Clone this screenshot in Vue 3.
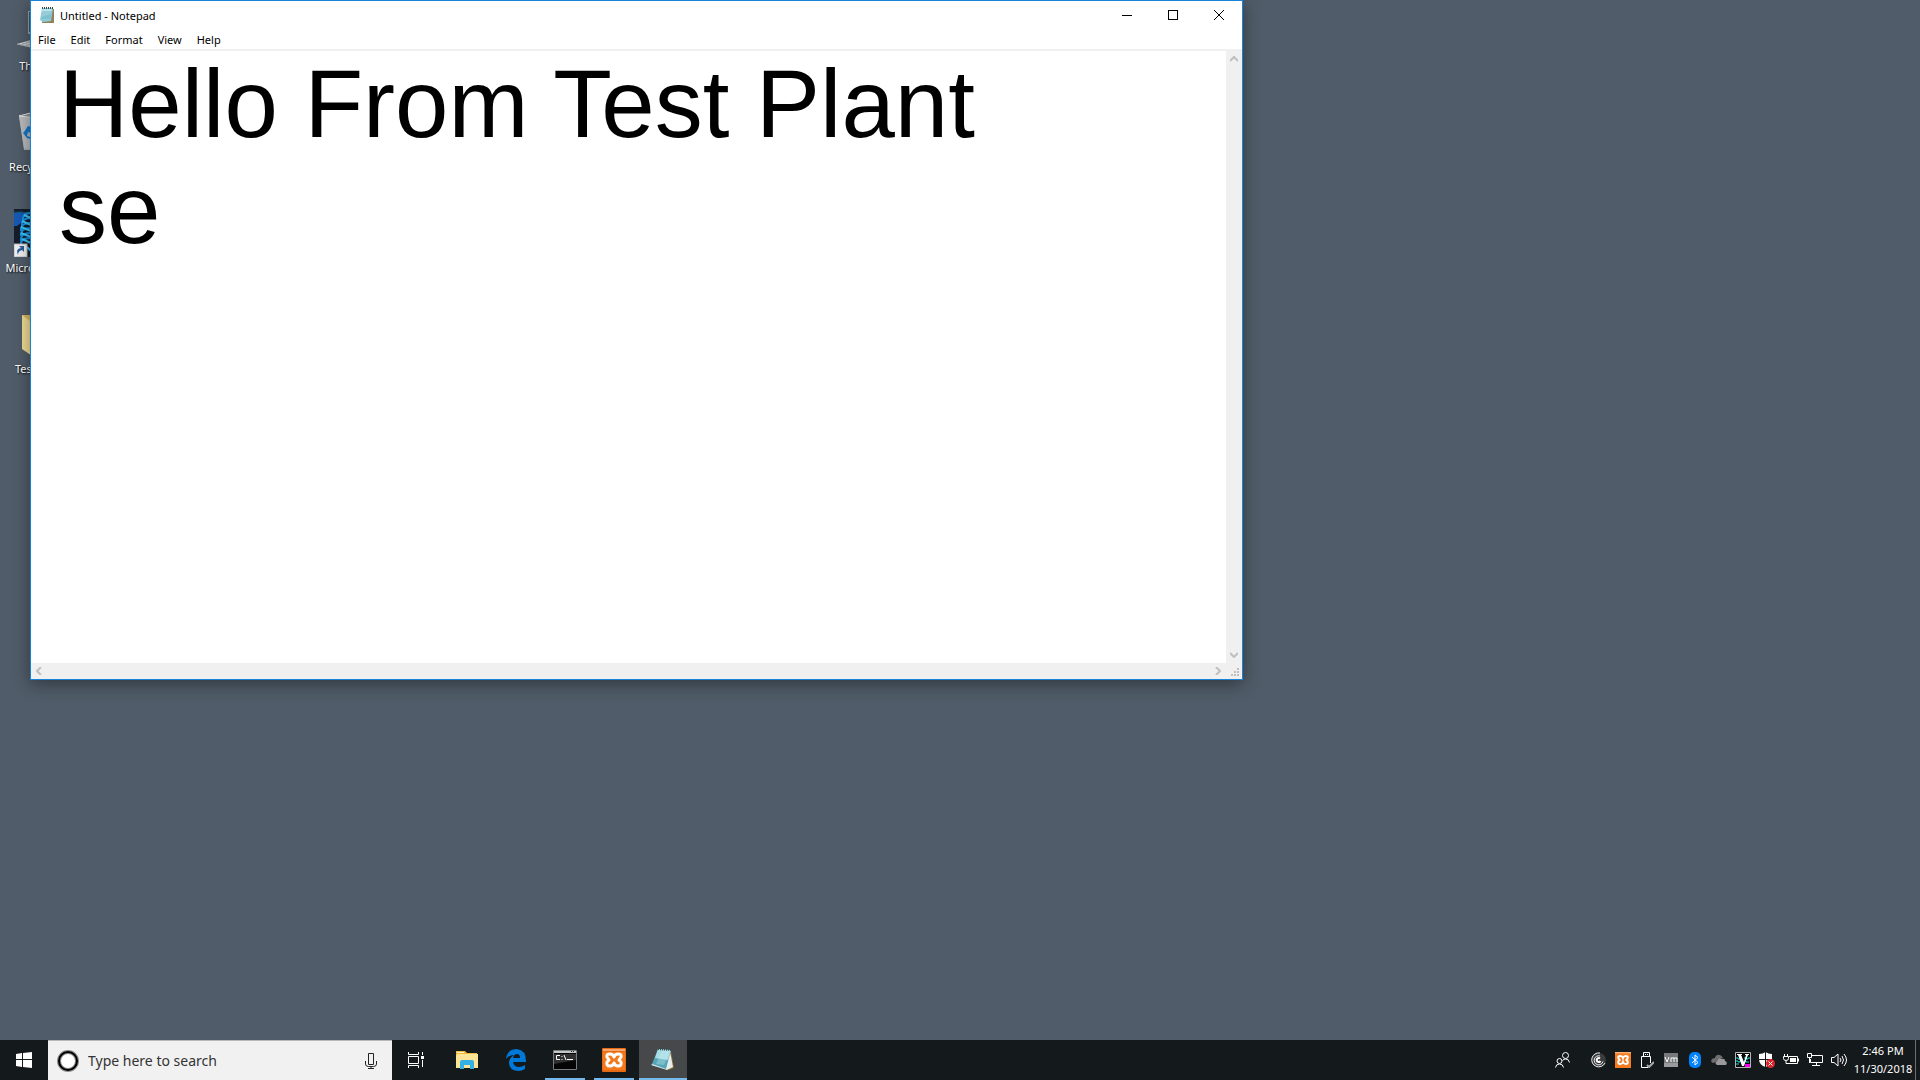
<script setup>
import { ref } from 'vue'

const menus = ['File', 'Edit', 'Format', 'View', 'Help']
const note = ref('Hello From Test Plant\nse')
const query = ref('')
</script>

<template>
  <div class="screen">
    <main class="desktop">
      <div class="shortcuts">
        <a class="shortcut" href="#pc">
          <svg width="48" height="48" viewBox="0 0 48 48">
            <rect x="14" y="4" width="34" height="23" fill="#8fa6b5" />
            <rect x="15" y="5" width="32" height="20" fill="#3d5666" />
            <path d="M3 37L17 33H44V42H24Z" fill="#d5d8da" />
            <path d="M3 37L24 42M8 36L24 40M12 35L24 38M7 38L19 33M12 39L22 34" stroke="#9da3a8" fill="none" />
          </svg>
          <span>This PC</span>
        </a>
        <a class="shortcut" href="#bin">
          <svg width="48" height="48" viewBox="0 0 48 48">
            <path d="M5 8L20 4L43 8L38 42H10Z" fill="#a9adb1" />
            <path d="M5 8L22 9L24 42L10 40Z" fill="#b9bcc0" />
            <path d="M5 8L20 4L43 8L22 10Z" fill="#8b9096" stroke="#dfe1e3" />
            <path d="M10 24l4-6 5 1-2 4 4 1v5h-3l2 3-7-2-4-5z" fill="#1276ce" />
            <path d="M14 24l3 1-1 4-3-1z" fill="#b9bcc0" />
          </svg>
          <span>Recycle Bin</span>
        </a>
        <a class="shortcut" href="#micro">
          <svg width="48" height="48" viewBox="0 0 48 48">
            <rect width="48" height="48" fill="#151d2b" />
            <path d="M0 4Q8 1 12 4L8 13L3 17H0Z" fill="#165ab4" />
            <path d="M0 3L18 4" stroke="#13586c" fill="none" />
            <path d="M17 4Q8 4 9 12M17 9Q7 9 8 17M17 14Q6 14 7 22M17 19Q6 19 7 27M17 24Q6 24 7 32M17 29Q6 29 7 36" stroke="#1591e4" stroke-width="2" fill="none" />
            <path d="M10 6L17 9M8 12L17 16M7 18L17 22M7 24L17 28M8 30L17 34M13 38L17 42" stroke="#3cc4f5" stroke-width="2" fill="none" />
            <rect y="35" width="13" height="13" fill="#f1f1f1" stroke="#b7b7b7" />
            <path d="M4 46Q1 40 7 39L5 37H10V43L8 41Q4 42 4 46Z" fill="#2d5e9e" />
          </svg>
          <span>Micro Dicom</span>
        </a>
        <a class="shortcut" href="#folder">
          <svg width="48" height="48" viewBox="0 0 48 48">
            <path d="M8 5H36V44H20L8 36Z" fill="#d6b65f" />
            <path d="M8 5L24 17V50L8 39Z" fill="#eedb93" />
          </svg>
          <span>Test Plan</span>
        </a>
      </div>

      <section class="window">
        <header class="titlebar">
          <svg class="app-icon" width="16" height="16" viewBox="0 0 16 16">
            <path d="M4 2H15V16H3Z" fill="#93815a" />
            <path d="M3 1H14L12 14L4 15L1 13Z" fill="#8accda" />
            <path d="M3 2H13L12 7L2 10Z" fill="#b9e5ed" />
            <path d="M3 5H13M2 7H13M2 9H12M2 11H12" stroke="#74b4c2" />
            <path d="M3 1H14" stroke="#33444b" stroke-width="2" stroke-dasharray="1 1" />
          </svg>
          <h1>Untitled - Notepad</h1>
          <div class="controls">
            <button aria-label="Minimize"><svg width="10" height="10" viewBox="0 0 10 10"><path d="M0 5H10V6H0Z" fill="#000" /></svg></button>
            <button aria-label="Maximize"><svg width="10" height="10" viewBox="0 0 10 10"><path d="M0 0H10V10H0ZM1 1V9H9V1Z" fill="#000" fill-rule="evenodd" /></svg></button>
            <button aria-label="Close"><svg width="10" height="10" viewBox="0 0 10 10"><path d="M0 0L10 10M10 0L0 10" stroke="#000" /></svg></button>
          </div>
        </header>
        <nav class="menubar">
          <button v-for="m in menus" :key="m">{{ m }}</button>
        </nav>
        <div class="editor">
          <textarea v-model="note" aria-label="Text editor" wrap="off" spellcheck="false"></textarea>
          <div class="vbar">
            <button aria-label="Scroll up"><svg width="8" height="6" viewBox="0 0 8 6"><path d="M0 5L4 1L8 5" /></svg></button>
            <button aria-label="Scroll down"><svg width="8" height="6" viewBox="0 0 8 6"><path d="M0 1L4 5L8 1" /></svg></button>
          </div>
          <div class="hbar">
            <button aria-label="Scroll left"><svg width="6" height="8" viewBox="0 0 6 8"><path d="M5 0L1 4L5 8" /></svg></button>
            <button aria-label="Scroll right"><svg width="6" height="8" viewBox="0 0 6 8"><path d="M1 0L5 4L1 8" /></svg></button>
          </div>
          <div class="grip">
            <svg width="8" height="8" viewBox="0 0 8 8"><path d="M6 0h2v2h-2zM3 3h2v2h-2zM6 3h2v2h-2zM0 6h2v2h-2zM3 6h2v2h-2zM6 6h2v2h-2z" fill="#bfbfbf" /></svg>
          </div>
        </div>
      </section>
    </main>

    <footer class="taskbar">
      <button class="task" aria-label="Start">
        <svg width="16" height="16" viewBox="0 0 16 16"><path d="M0 2L6 1V7H0ZM7 1L16 0V7H7ZM0 8H6V15L0 14ZM7 8H16V16L7 15Z" fill="#fff" /></svg>
      </button>
      <label class="search">
        <svg width="22" height="22" viewBox="0 0 22 22"><circle cx="11" cy="11" r="9" fill="#fff" stroke="#8c8c8c" stroke-width="4" /><circle cx="11" cy="11" r="9" fill="none" stroke="#000" stroke-width="2" /></svg>
        <input v-model="query" type="text" placeholder="Type here to search" aria-label="Search" />
        <svg width="12" height="16" viewBox="0 0 12 16"><path d="M3.5 .5h5v11h-5zM.5 8v3q0 2.500 3 2.500h5q3 0 3-2.500v-3M6 13v3M3 15.500h6" fill="none" stroke="#222" /></svg>
      </label>
      <button class="task" aria-label="Task view">
        <svg width="16" height="16" viewBox="0 0 16 16"><path d="M.5 0v2.500h10V0M.5 4.500h10v7H.5zM.5 16v-2.500h10V16M14.500 0v3M14.500 8v7" fill="none" stroke="#fff" /><path d="M13 4h3v3h-3z" fill="#fff" /></svg>
      </button>
      <div class="apps">
        <button class="task" aria-label="File Explorer">
          <svg width="22" height="18" viewBox="0 0 22 18"><path d="M0 0H9L11 2H21V17H0Z" fill="#f0b83c" /><path d="M1 3H22V17H0V5Z" fill="#fde598" /><path d="M1 1H8V2H1Z" fill="#fff5bd" /><path d="M4 18V11Q4 9 6 9H16Q18 9 18 11V18H14V14H8V18Z" fill="#33b0e6" /></svg>
        </button>
        <button class="task" aria-label="Edge">
          <svg width="20" height="22" viewBox="0 0 20 22"><path d="M0 10Q1 0 11 0Q20 1 20 12V13H7Q8 18 13 18Q16 18 19 16V20Q16 22 12 22Q3 21 3 14Q3 9 8 6Q3 6 0 10ZM7 9H14Q14 5 11 5Q8 5 7 9Z" fill="#0078d7" /></svg>
        </button>
        <button class="task running" aria-label="Command Prompt">
          <svg width="24" height="20" viewBox="0 0 24 20"><path d="M.5 .5h23v19H.5z" fill="#050505" stroke="#777b7c" /><path d="M1 1h22v2H1z" fill="#c5c8c9" /><path d="M18 1h1v1h-1zM20 1h1v1h-1z" fill="#222" /><path d="M1 4H23V10L1 14Z" fill="#303030" /><path d="M7 5.500H3.500v4H7M9 6v1M9 9v1M11 5l2 5M14 9.500h6" stroke="#fff" fill="none" /></svg>
        </button>
        <button class="task running" aria-label="XAMPP">
          <svg width="24" height="24" viewBox="0 0 24 24"><rect width="24" height="24" rx="1" fill="#e46b13" /><path d="M1 1H23V3H1Z" fill="#f6a66e" /><rect x="1" y="4" width="22" height="18" fill="#f27a1c" /><path d="M12 9Q11 6 8 6Q4 6 5 9L7 12L5 14Q4 18 8 18Q11 18 12 15Q13 18 16 18Q20 18 19 14L17 12L19 9Q20 6 16 6Q13 6 12 9Z" fill="none" stroke="#fff" stroke-width="3" stroke-linejoin="round" /></svg>
        </button>
        <button class="task active" aria-label="Notepad">
          <svg width="24" height="24" viewBox="0 0 24 24"><path d="M20 3L23 20L18 22Z" fill="#8a6c32" /><path d="M19 3L22 19L16 22L0 17Z" fill="#e8eceb" /><path d="M7 1L20 2L15 21L1 16Z" fill="#55a7b8" /><path d="M7 1L20 2L17 12L4 10Z" fill="#a9dce3" /><path d="M11 3L19 3L13 17L5 16Z" fill="#c7edf0" opacity=".35" /><path d="M7 1L20 2" stroke="#394b50" stroke-width="2" stroke-dasharray="1 1" /></svg>
        </button>
      </div>

      <div class="tray">
        <button class="people" aria-label="People">
          <svg width="16" height="16" viewBox="0 0 16 16" fill="none" stroke="#fff"><circle cx="10.500" cy="3.500" r="3" /><circle cx="4.500" cy="9" r="2.500" /><path d="M.5 15.500Q1 12 4.500 12T8.500 15.500M7.500 8.500Q9 7 10.500 7Q14 7 14.500 10.500" /></svg>
        </button>
        <button aria-label="Receiver">
          <svg width="16" height="16" viewBox="0 0 16 16"><circle cx="8" cy="8" r="7" fill="#3a3c3e" /><path d="M9 1A7 7 0 1 0 14 11M9 4A4.500 4.500 0 1 0 12 9.500" fill="none" stroke="#eee" /><path d="M9 6.500A2 2 0 1 0 9.500 9" fill="none" stroke="#fff" stroke-width="2" /></svg>
        </button>
        <button aria-label="XAMPP control">
          <svg width="16" height="16" viewBox="0 0 24 24"><rect width="24" height="24" fill="#f47b20" /><path d="M0 0H24V2H0Z" fill="#f8b07c" /><path d="M12 9Q11 6 8 6Q4 6 5 9L7 12L5 14Q4 18 8 18Q11 18 12 15Q13 18 16 18Q20 18 19 14L17 12L19 9Q20 6 16 6Q13 6 12 9Z" stroke="#fff" stroke-width="3" fill="none" /></svg>
        </button>
        <button aria-label="Safely remove hardware">
          <svg width="14" height="16" viewBox="0 0 14 16"><path d="M3.500 .5h6v4h-6zM1.500 4.500h9V11M1.500 4.500v11H8M5.500 2v1M7.500 2v1" fill="none" stroke="#fff" /><path d="M7 13L9 15L14 10" fill="none" stroke="#aaa" stroke-width="2" /></svg>
        </button>
        <button aria-label="Virtual machine tools">
          <svg width="14" height="14" viewBox="0 0 14 14"><path d="M0 0h14v14H0z" fill="#77797b" /><path d="M0 10h14v4H0z" fill="#999b9d" /><path d="M1 4L3 9L5 4M7 9V5H10V9M10 5H13V9" stroke="#fff" stroke-width="1" fill="none" /></svg>
        </button>
        <button aria-label="Bluetooth">
          <svg width="12" height="16" viewBox="0 0 12 16"><rect width="12" height="16" rx="5" fill="#0082fc" /><path d="M3 5L9 10.500L6 13V3L9 5.500L3 11" fill="none" stroke="#fff" /></svg>
        </button>
        <button aria-label="OneDrive">
          <svg width="16" height="12" viewBox="0 0 16 12"><path d="M2 9Q-1 8 1 5Q3 4 4 4Q5 0 9 1Q11 2 12 4L7 5L5 8Z" fill="#6e6e6e" /><path d="M6 11Q3 9 6 7Q7 3 11 5Q14 4 14 7Q17 8 15 11Z" fill="#9a9a9a" /></svg>
        </button>
        <button aria-label="Volume graph">
          <svg width="16" height="16" viewBox="0 0 16 16"><path d="M.5 .5h15v15H.5z" fill="#080808" stroke="#b5b5b5" /><path d="M1 6h2v1h2V5h2M1 9h2v1h2v-1h2M9 6h2v1h2V6h2M9 9h2v1h3M1 12h3" stroke="#19dce0" fill="none" /><path d="M2 2H7V3H6L9 10L11 3H10V2H14V3H13L9 14H7L3 3H2Z" fill="#fff" /><path d="M10 12h5v3h-5z" fill="#ef00ef" /></svg>
        </button>
        <button aria-label="Security">
          <svg width="16" height="16" viewBox="0 0 16 16"><path d="M0 2Q4 2 6.500 0Q9 2 13 2V7Q13 13 6.500 15Q0 13 0 7Z" fill="#fff" /><path d="M6.500 0V15M0 7.500H13" stroke="#15191c" /><circle cx="11.500" cy="11.500" r="4.500" fill="#dc252b" /><path d="M9.500 9.500l4 4M13.500 9.500l-4 4" stroke="#fff" /></svg>
        </button>
        <button aria-label="Power">
          <svg width="16" height="14" viewBox="0 0 16 14"><path d="M6 3.500h8.500v7H5M15.500 5.500v3M1.500 1v2M4.500 1v2M.5 3.500h5v2q0 2-2.500 2t-2.500-2zM3 8v2.500h3" fill="none" stroke="#fff" /><path d="M7 5h6v4H7z" fill="#fff" /></svg>
        </button>
        <button aria-label="Network">
          <svg width="16" height="14" viewBox="0 0 16 14"><path d="M5 2.500h10.500v7H3.500V6M9.500 10v3M5 12.500h8M.5 .5h4v4h-4zM2.500 5v5" fill="none" stroke="#fff" /></svg>
        </button>
        <button aria-label="Volume">
          <svg width="16" height="14" viewBox="0 0 16 14"><path d="M.5 4.500h2.500L7 1v12L3 9.500H.5zM9 5q2 2 0 4M11 3q3 4 0 8M13 1q5 6 0 12" fill="none" stroke="#fff" /></svg>
        </button>
        <button class="clock"><time>2:46 PM</time><time>11/30/2018</time></button>
        <button class="peek" aria-label="Show desktop"></button>
      </div>
    </footer>
  </div>
</template>

<style>
body { margin: 0; background: #505c69; }
</style>

<style scoped>
.screen {
  display: flex;
  flex-direction: column;
  min-height: 100vh;
  background: #505c69;
  font-family: "Noto Sans", "Open Sans", sans-serif;
  font-size: 11px;
}
button {
  display: flex;
  align-items: center;
  justify-content: center;
  margin: 0;
  padding: 0;
  border: 0;
  background: none;
  color: inherit;
  font: inherit;
}
svg { display: block; flex: none; }
.desktop { position: relative; flex: 1; }
.shortcuts {
  display: flex;
  flex-direction: column;
  gap: 26px;
  width: 76px;
  padding-top: 7px;
}
.shortcut {
  display: flex;
  flex-direction: column;
  align-items: center;
  gap: 3px;
  height: 75px;
  color: #fff;
  line-height: 16px;
  white-space: nowrap;
  text-decoration: none;
  text-shadow: 1px 1px 2px #000;
}
.window {
  position: absolute;
  top: 0;
  left: 30px;
  display: flex;
  flex-direction: column;
  box-sizing: border-box;
  width: 1213px;
  height: 680px;
  border: 1px solid #1883d7;
  background: #fff;
  box-shadow: 0 4px 16px rgba(0, 0, 0, .4);
}
.titlebar {
  display: flex;
  align-items: center;
  height: 28px;
  padding-left: 8px;
}
.titlebar h1 {
  flex: 1;
  margin: 0;
  padding-left: 5px;
  font-size: 11px;
  font-weight: 400;
}
.controls { display: flex; height: 100%; }
.controls button { width: 46px; }
.menubar {
  display: flex;
  gap: 1px;
  height: 20px;
  border-bottom: 2px solid #f0f0f0;
}
.menubar button { padding: 2px 7px 0; line-height: 16px; }
.editor {
  display: grid;
  flex: 1;
  grid-template-columns: 1fr 16px;
  grid-template-rows: 1fr 16px;
}
.editor textarea {
  margin: 0;
  padding: 0 0 0 28px;
  border: 0;
  outline: 0;
  overflow: hidden;
  resize: none;
  background: #fff;
  color: #000;
  font: 96px/106px "Liberation Sans", Arial, sans-serif;
}
.vbar, .hbar { display: flex; justify-content: space-between; background: #f0f0f0; }
.vbar { flex-direction: column; }
.vbar button, .hbar button { width: 16px; height: 16px; }
.vbar path, .hbar path { fill: none; stroke: #bfbfbf; stroke-width: 2; }
.grip {
  display: flex;
  align-items: flex-end;
  justify-content: flex-end;
  padding: 3px;
  background: #f0f0f0;
}
.taskbar {
  display: flex;
  height: 40px;
  background: #14191c;
  color: #fff;
}
.task { box-sizing: border-box; width: 48px; height: 40px; }
.search {
  display: flex;
  align-items: center;
  gap: 9px;
  box-sizing: border-box;
  width: 344px;
  padding: 0 15px 0 9px;
  border-top: 1px solid #b9b7b9;
  background: #f1f1f1;
}
.search input {
  flex: 1;
  min-width: 0;
  padding: 0;
  border: 0;
  outline: 0;
  background: none;
  color: #333;
  font: 14px/20px "Noto Sans", "Open Sans", sans-serif;
}
.search input::placeholder { color: #333; opacity: 1; }
.apps { display: flex; gap: 1px; padding-left: 3px; }
.running { background: linear-gradient(#76b9ed, #76b9ed) center bottom / 40px 2px no-repeat; }
.active { background: linear-gradient(#76b9ed, #76b9ed) center bottom / 48px 2px no-repeat #464849; }
.tray { display: flex; margin-left: auto; }
.tray button { width: 24px; }
.tray .people { margin-right: 12px; }
.tray .clock { flex-direction: column; width: 64px; line-height: 18px; }
.tray .peek { width: 5px; border-left: 1px solid #6b6f71; }
</style>
